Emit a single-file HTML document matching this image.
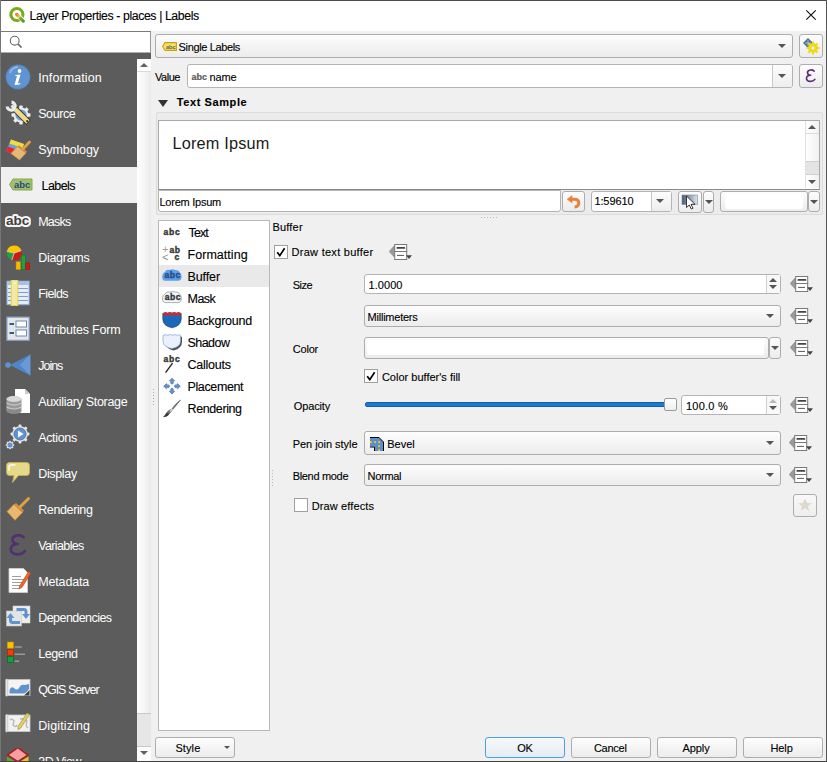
<!DOCTYPE html>
<html><head><meta charset="utf-8">
<style>
*{box-sizing:border-box;margin:0;padding:0}
html,body{width:827px;height:762px;overflow:hidden;background:#f0f0f0;font-family:"Liberation Sans",sans-serif;color:#000}
.a{position:absolute}
.t{position:absolute;white-space:pre;line-height:1;-webkit-text-stroke:0.12px currentColor}
.btn{position:absolute;border:1px solid #adadad;border-radius:3px;background:linear-gradient(#fdfdfd,#ececec)}
.field{position:absolute;border:1px solid #b4b4b4;border-radius:3px;background:#fff}
.tri{position:absolute;width:0;height:0;border-left:4px solid transparent;border-right:4px solid transparent;border-top:4px solid #555}
.triu{position:absolute;width:0;height:0;border-left:4px solid transparent;border-right:4px solid transparent;border-bottom:4px solid #555}
.f11{font-size:11px;letter-spacing:-0.1px;color:#000}
.f12{font-size:12px;color:#000}
.cb{position:absolute;width:14px;height:14px;border:1px solid #a0a0a0;background:#fff}
</style></head><body>
<div class="a" style="left:0;top:0;width:827px;height:31px;background:#fff"></div>
<div class="a" style="left:0;top:0;width:827px;height:1px;background:#4a4a4a"></div>
<svg class="a" style="left:8px;top:6px" width="18" height="18" viewBox="0 0 18 18"><defs><linearGradient id="qg" gradientUnits="userSpaceOnUse" x1="8.3" y1="8.3" x2="15.5" y2="15.5"><stop offset="0" stop-color="#f07818"/><stop offset="0.22" stop-color="#f0a040"/><stop offset="0.38" stop-color="#d8e070"/><stop offset="0.55" stop-color="#78a838"/><stop offset="1" stop-color="#5a9a28"/></linearGradient></defs>
<circle cx="8.9" cy="8.5" r="6.05" fill="none" stroke="#7aaa1e" stroke-width="3.1"/>
<path d="M11 10.6 L17 16.6" stroke="#fff" stroke-width="4.6"/>
<path d="M8.6 8.4 L15.3 15.1" stroke="url(#qg)" stroke-width="3.2" stroke-linecap="round"/></svg>
<div class="t" style="left:29.50px;top:10px;font-family:'Liberation Sans';font-size:12.3px;font-weight:400;letter-spacing:-0.403px;color:#000;">Layer Properties - places | Labels</div>
<svg class="a" style="left:804px;top:8px" width="14" height="14" viewBox="0 0 14 14"><path d="M2.3 2.3L11.7 11.7M11.7 2.3L2.3 11.7" stroke="#111" stroke-width="1.15"/></svg>
<div class="a" style="left:0;top:31px;width:151px;height:22px;background:#fff;border-top:1px solid #7a7a7a;border-right:1px solid #9a9a9a;border-bottom:1px solid #adadad"></div>
<svg class="a" style="left:9px;top:35px" width="14" height="14" viewBox="0 0 14 14"><circle cx="5.7" cy="5.7" r="4.4" fill="none" stroke="#6a6a6a" stroke-width="1.1"/><path d="M8.9 8.9L12.6 12.6" stroke="#6a6a6a" stroke-width="1.5"/></svg>
<div class="a" style="left:0;top:53px;width:151px;height:6px;background:#5c5c5c"></div>
<div class="a" style="left:0;top:53px;width:137px;height:709px;background:#5c5c5c"></div>
<svg class="a" style="left:5px;top:64px" width="26" height="26" viewBox="0 0 26 26"><circle cx="13" cy="13" r="12.4" fill="#4f86c6"/><circle cx="13" cy="13" r="11.5" fill="#5f93d2"/><path d="M5 9 A9 9 0 0 1 13 3" stroke="#9cc0ea" stroke-width="1.3" fill="none"/><circle cx="14.5" cy="7" r="1.9" fill="#fff"/><path d="M10.5 11 L15.5 10.5 L13 19 Q13.5 19.8 15.5 19 L15 20.5 L9.5 21 L12 12 L10.3 12 Z" fill="#fff"/></svg>
<div class="t" style="left:38.2px;top:71.5px;font-size:12.5px;letter-spacing:0.1px;color:#fff;-webkit-text-stroke:0">Information</div>
<svg class="a" style="left:5px;top:100px" width="26" height="26" viewBox="0 0 26 26"><g fill="#ececec"><circle cx="16" cy="15" r="7.6"/><rect x="14.3" y="5.5" width="3.4" height="19" rx="0.8" transform="rotate(0 16 15)"/><rect x="14.3" y="5.5" width="3.4" height="19" rx="0.8" transform="rotate(45 16 15)"/><rect x="14.3" y="5.5" width="3.4" height="19" rx="0.8" transform="rotate(90 16 15)"/><rect x="14.3" y="5.5" width="3.4" height="19" rx="0.8" transform="rotate(135 16 15)"/></g><circle cx="16" cy="15" r="5.6" fill="#6f9fd8"/><path d="M9.5 8.5 L23.5 22.5" stroke="#2a2a2a" stroke-width="6.4"/><path d="M10.3 9.3 L23 22" stroke="#f2da80" stroke-width="4.6"/><circle cx="22.2" cy="21.2" r="1.1" fill="#333"/><path d="M10 9 L6.5 5.5" stroke="#e8e8e8" stroke-width="3"/><path d="M6.5 2.2 A4 4 0 1 1 2.2 6.5" stroke="#ececec" stroke-width="3.2" fill="none"/></svg>
<div class="t" style="left:38.2px;top:107.5px;font-size:12.5px;letter-spacing:-0.4px;color:#fff;-webkit-text-stroke:0">Source</div>
<svg class="a" style="left:5px;top:136px" width="26" height="26" viewBox="0 0 26 26"><path d="M6 3.5 L19 8 L14.5 21 L1 15.5 Z" fill="#6d9fd8"/><path d="M6 3.5 L19 8 L17.5 12 L4.5 7.5Z" fill="#f0dc40"/><path d="M1 15.5 L3.2 10.5 L16 15.5 L14.5 21Z" fill="#e82828"/><path d="M12.5 10.5 L21 17 L14.5 24 L6 17.5 Z" fill="#e6b878" stroke="#c89040" stroke-width="0.7"/><path d="M12.5 10.5 L21 17 L22 15.5 L14 9.2Z" fill="#d09040"/><path d="M18 13 L24.5 6" stroke="#e0a040" stroke-width="2.8" stroke-linecap="round"/></svg>
<div class="t" style="left:38.2px;top:143.5px;font-size:12.5px;letter-spacing:-0.125px;color:#fff;-webkit-text-stroke:0">Symbology</div>
<div class="a" style="left:1px;top:167px;width:136px;height:36px;background:#f0f0f0"></div>
<svg class="a" style="left:8px;top:178px" width="26" height="14" viewBox="0 0 26 14"><path d="M1.5 6.5 L5 1 L24 1 L24 12 L5 12 Z" fill="#9ec070" stroke="#8aa84a" stroke-width="1"/><text x="6" y="10" font-family="Liberation Sans" font-weight="bold" font-size="9.5" fill="#2a4a78">abc</text></svg>
<div class="t" style="left:41.6px;top:179.5px;font-size:12.5px;letter-spacing:-0.6px;color:#000">Labels</div>
<svg class="a" style="left:5px;top:208px" width="26" height="26" viewBox="0 0 26 26"><text x="1" y="17" font-family="Liberation Sans" font-weight="bold" font-size="13.5" fill="#404040" stroke="#f4f4f4" stroke-width="4.2" paint-order="stroke" stroke-linejoin="round">abc</text></svg>
<div class="t" style="left:38.2px;top:215.5px;font-size:12.5px;letter-spacing:-0.75px;color:#fff;-webkit-text-stroke:0">Masks</div>
<svg class="a" style="left:5px;top:244px" width="26" height="26" viewBox="0 0 26 26"><circle cx="9.2" cy="9" r="7.5" fill="#d01818"/><path d="M9.2 9 L1.9 7.3 A7.5 7.5 0 0 1 16.3 6.6Z" fill="#f5c800"/><path d="M9.2 9 L1.9 7.3 A7.5 7.5 0 0 0 6.8 16.1Z" fill="#20a040"/><path d="M9.2 9 L1.9 7.3 M9.2 9 L16.3 6.6 M9.2 9 L6.8 16.1" stroke="#eee" stroke-width="0.7"/><rect x="11" y="17.7" width="4.5" height="8" fill="#f5b800" stroke="#c08000" stroke-width="0.5"/><rect x="16.3" y="11" width="4.2" height="14.7" fill="#20a040" stroke="#107020" stroke-width="0.5"/><rect x="20.8" y="19" width="3.8" height="6.7" fill="#d01818" stroke="#901010" stroke-width="0.5"/></svg>
<div class="t" style="left:38.2px;top:251.5px;font-size:12.5px;letter-spacing:-0.286px;color:#fff;-webkit-text-stroke:0">Diagrams</div>
<svg class="a" style="left:5px;top:280px" width="26" height="26" viewBox="0 0 26 26"><rect x="1.9" y="1.1" width="22.3" height="23.7" fill="#e4ecf6" stroke="#7f9fc8" stroke-width="1"/><rect x="2.4" y="1.6" width="21.3" height="3.4" fill="#a8c0e0"/><path d="M3 8.5h20M3 12.5h20M3 16.5h20M3 20.5h20" stroke="#7f9fc8" stroke-width="1"/><rect x="6.3" y="0" width="6.5" height="25.8" fill="#f2e8a8" stroke="#e8d840" stroke-width="1"/><rect x="9" y="2.5" width="1.3" height="1.3" fill="#fff"/></svg>
<div class="t" style="left:38.2px;top:287.5px;font-size:12.5px;letter-spacing:-0.6px;color:#fff;-webkit-text-stroke:0">Fields</div>
<svg class="a" style="left:5px;top:316px" width="26" height="26" viewBox="0 0 26 26"><rect x="1.9" y="1.1" width="22.3" height="23.2" fill="#e6e6e6" stroke="#7f9fc8" stroke-width="1.2"/><rect x="11" y="5" width="10.5" height="6" fill="#fff" stroke="#6a8ab8" stroke-width="1"/><rect x="11" y="14" width="10.5" height="6" fill="#fff" stroke="#6a8ab8" stroke-width="1"/><rect x="4.5" y="7" width="4.5" height="2" fill="#3a5a80"/><rect x="4.5" y="16" width="4.5" height="2" fill="#3a5a80"/></svg>
<div class="t" style="left:38.2px;top:323.5px;font-size:12.5px;letter-spacing:-0.214px;color:#fff;-webkit-text-stroke:0">Attributes Form</div>
<svg class="a" style="left:5px;top:352px" width="26" height="26" viewBox="0 0 26 26"><path d="M5 13 L25.3 2.6 L25.3 23.4Z" fill="#4f86c8"/><path d="M25.3 2.6 L25.3 23.4 L15 13Z" fill="#6a9ad6"/><circle cx="3" cy="13" r="2.8" fill="#5f93cf"/></svg>
<div class="t" style="left:38.2px;top:359.5px;font-size:12.5px;letter-spacing:-1.0px;color:#fff;-webkit-text-stroke:0">Joins</div>
<svg class="a" style="left:5px;top:388px" width="26" height="26" viewBox="0 0 26 26"><path d="M10 1 L20 1 L25 6 L25 25 L10 25 Z" fill="#fff"/><path d="M20 1 L20 6 L25 6Z" fill="#ccc"/><ellipse cx="9" cy="11" rx="7.5" ry="3" fill="#bbb"/><rect x="1.5" y="11" width="15" height="12" fill="#9a9a9a"/><ellipse cx="9" cy="23" rx="7.5" ry="3" fill="#8a8a8a"/><path d="M1.5 15 Q9 19 16.5 15 M1.5 19 Q9 23 16.5 19" stroke="#d0d0d0" fill="none" stroke-width="1"/><ellipse cx="9" cy="11" rx="7.5" ry="3" fill="#d8d8d8"/></svg>
<div class="t" style="left:38.2px;top:395.5px;font-size:12.5px;letter-spacing:-0.312px;color:#fff;-webkit-text-stroke:0">Auxiliary Storage</div>
<svg class="a" style="left:5px;top:424px" width="26" height="26" viewBox="0 0 26 26"><g fill="#e6e6e6"><rect x="13.6" y="0.6" width="2.8" height="18.8" rx="0.7" transform="rotate(0 15 10)"/><rect x="13.6" y="0.6" width="2.8" height="18.8" rx="0.7" transform="rotate(45 15 10)"/><rect x="13.6" y="0.6" width="2.8" height="18.8" rx="0.7" transform="rotate(90 15 10)"/><rect x="13.6" y="0.6" width="2.8" height="18.8" rx="0.7" transform="rotate(135 15 10)"/><circle cx="15" cy="10" r="7.8"/></g><circle cx="15" cy="10" r="6" fill="#5f93d2" stroke="#3d6aa0" stroke-width="0.8"/><path d="M13 6.5 L18.5 10 L13 13.5Z" fill="#fff"/><g fill="#e0e0e0"><rect x="4.2" y="16.8" width="1.6" height="8.4" transform="rotate(0 5 21)"/><rect x="4.2" y="16.8" width="1.6" height="8.4" transform="rotate(45 5 21)"/><rect x="4.2" y="16.8" width="1.6" height="8.4" transform="rotate(90 5 21)"/><rect x="4.2" y="16.8" width="1.6" height="8.4" transform="rotate(135 5 21)"/><circle cx="5" cy="21" r="3.4"/></g><circle cx="5" cy="21" r="2.5" fill="#5f93d2"/></svg>
<div class="t" style="left:38.2px;top:431.5px;font-size:12.5px;letter-spacing:-0.333px;color:#fff;-webkit-text-stroke:0">Actions</div>
<svg class="a" style="left:5px;top:460px" width="26" height="26" viewBox="0 0 26 26"><path d="M4.5 2.5 L21.5 2.5 Q24.5 2.5 24.5 5.5 L24.5 12.5 Q24.5 15.5 21.5 15.5 L13.5 15.5 L7.5 22.5 L9 15.5 L4.5 15.5 Q1.5 15.5 1.5 12.5 L1.5 5.5 Q1.5 2.5 4.5 2.5Z" fill="#e6d98a" stroke="#c4b050" stroke-width="0.9"/><path d="M4 10 L4 7 Q4 4.8 6.5 4.8 L10 4.8" stroke="#fff" stroke-width="1.3" fill="none" stroke-linecap="round"/></svg>
<div class="t" style="left:38.2px;top:467.5px;font-size:12.5px;letter-spacing:-0.333px;color:#fff;-webkit-text-stroke:0">Display</div>
<svg class="a" style="left:5px;top:496px" width="26" height="26" viewBox="0 0 26 26"><path d="M2 15.6 L9 8.3 L17.5 16.5 L10 24.3Z" fill="#e8b870" stroke="#c88a30" stroke-width="0.8"/><path d="M9 8.3 L17.5 16.5 L19 14.5 L11 7Z" fill="#d09040"/><path d="M15 11 L23.5 2.5" stroke="#e0a040" stroke-width="3" stroke-linecap="round"/></svg>
<div class="t" style="left:38.2px;top:503.5px;font-size:12.5px;letter-spacing:-0.375px;color:#fff;-webkit-text-stroke:0">Rendering</div>
<svg class="a" style="left:5px;top:532px" width="26" height="26" viewBox="0 0 26 26"><path d="M18.5 5.2 Q16 2.8 12.5 3.3 Q7 4 7.5 8 Q8 11.5 12.5 12 Q6 12.5 5.8 17 Q6 22.3 12.5 22.3 Q17.5 22.3 19.8 19" stroke="#55306f" stroke-width="2.7" fill="none" stroke-linecap="round"/><path d="M11 12 L14 12" stroke="#55306f" stroke-width="1.8"/></svg>
<div class="t" style="left:38.2px;top:539.5px;font-size:12.5px;letter-spacing:-0.625px;color:#fff;-webkit-text-stroke:0">Variables</div>
<svg class="a" style="left:5px;top:568px" width="26" height="26" viewBox="0 0 26 26"><path d="M4 0.5 L18.5 0.5 L22.5 4.5 L22.5 24.5 L4 24.5Z" fill="#fff" stroke="#d0d0d0" stroke-width="0.8"/><path d="M7 8.5h9M7 11.5h12M7 14.5h12M7 17.5h11M7 20.5h8" stroke="#a0a0a0" stroke-width="1"/><path d="M14.5 18 L23.5 3.5 L26 5 L17 19.5 L14 20.8Z" fill="#e86a28" stroke="#a04010" stroke-width="0.5"/></svg>
<div class="t" style="left:38.2px;top:575.5px;font-size:12.5px;letter-spacing:-0.143px;color:#fff;-webkit-text-stroke:0">Metadata</div>
<svg class="a" style="left:5px;top:604px" width="26" height="26" viewBox="0 0 26 26"><rect x="8" y="2" width="17" height="17" fill="#eeeeee" stroke="#d0d0d0" stroke-width="0.6"/><rect x="1.5" y="7" width="15" height="15" fill="#e4e4e4" stroke="#c8c8c8" stroke-width="0.6"/><path d="M11.5 5.5 L19 5.5 Q21 5.5 21 8 L21 11" stroke="#5f93cf" stroke-width="3" fill="none"/><path d="M17 10 L21 15 L25 10Z" fill="#5f93cf"/><path d="M15 18.5 L7.5 18.5 Q5.5 18.5 5.5 16 L5.5 13" stroke="#5f93cf" stroke-width="3" fill="none"/><path d="M1.5 14 L5.5 9 L9.5 14Z" fill="#5f93cf"/></svg>
<div class="t" style="left:38.2px;top:611.5px;font-size:12.5px;letter-spacing:-0.545px;color:#fff;-webkit-text-stroke:0">Dependencies</div>
<svg class="a" style="left:5px;top:640px" width="26" height="26" viewBox="0 0 26 26"><rect x="2.3" y="2" width="6.2" height="6.2" fill="#f5c400" stroke="#d09000" stroke-width="0.6"/><rect x="2.3" y="9.6" width="6.2" height="6" fill="#e84010" stroke="#b02000" stroke-width="0.6"/><rect x="2.3" y="16.6" width="6.2" height="6" fill="#10a040" stroke="#106020" stroke-width="0.6"/><path d="M9.7 7h7M9.7 14.2h10.3M9.7 21.2h4.5" stroke="#9a9a9a" stroke-width="1.6"/></svg>
<div class="t" style="left:38.2px;top:647.5px;font-size:12.5px;letter-spacing:-0.4px;color:#fff;-webkit-text-stroke:0">Legend</div>
<svg class="a" style="left:5px;top:676px" width="26" height="26" viewBox="0 0 26 26"><rect x="2" y="3.6" width="23" height="16" fill="#f4f4f4" stroke="#c8c8c8" stroke-width="0.8"/><rect x="0.6" y="3" width="2.2" height="17.2" rx="1" fill="#e8e8e8" stroke="#bbb" stroke-width="0.6"/><path d="M4.5 17.5 L4.5 14 Q6 10 9 12 Q12 15 14 12 Q16 7.5 20 9 L24 8 L24 13 Q21 17 19 17.5Z" fill="#5f93cf"/><path d="M19 19.5 L24.5 14 L24.5 19.5Z" fill="#444"/></svg>
<div class="t" style="left:38.2px;top:683.5px;font-size:12.5px;letter-spacing:-1.0px;color:#fff;-webkit-text-stroke:0">QGIS Server</div>
<svg class="a" style="left:5px;top:712px" width="26" height="26" viewBox="0 0 26 26"><rect x="2" y="3" width="23" height="16.5" fill="#f2f2f2" stroke="#c8c8c8" stroke-width="0.8"/><rect x="0.6" y="2.5" width="2.2" height="17.5" rx="1" fill="#e8e8e8" stroke="#bbb" stroke-width="0.6"/><path d="M5 8 Q7 6 9 9 L8 13 Q11 16 12 13 M15 7 Q18 6 22 9 Q20 14 23 16" stroke="#b8b8b8" stroke-width="1.4" fill="none"/><path d="M13 14.5 L22 1 L24.5 2.6 L15.5 16.3 L13 17.5Z" fill="#e8d060" stroke="#908030" stroke-width="0.6"/></svg>
<div class="t" style="left:38.2px;top:719.5px;font-size:12.5px;letter-spacing:0.111px;color:#fff;-webkit-text-stroke:0">Digitizing</div>
<svg class="a" style="left:5px;top:748px" width="26" height="26" viewBox="0 0 26 26"><path d="M12.8 -0.3 L22.7 7 L12.8 13.5 L2.8 7Z" fill="#f4a0a0" stroke="#b01818" stroke-width="1.3"/><path d="M2 8.5 L12.8 15 L12.8 20 L2 13Z" fill="#60a830"/><path d="M23.5 8.5 L12.8 15 L12.8 20 L23.5 13Z" fill="#e8c820"/><path d="M12.8 -0.3 L22.7 7 L12.8 13.5 L2.8 7Z" fill="#f4a0a0" stroke="#b01818" stroke-width="1.3"/></svg>
<div class="t" style="left:38.2px;top:755.5px;font-size:12.5px;letter-spacing:-0.5px;color:#fff;-webkit-text-stroke:0">3D View</div>
<div class="a" style="left:137px;top:59px;width:14px;height:702px;background:linear-gradient(90deg,#fff,#f2f2f2 70%,#e8e8e8)"></div>
<div class="a" style="left:137px;top:59px;width:14px;height:13px;background:#fcfcfc;border-bottom:1px solid #d8d8d8"></div>
<div class="triu" style="left:140px;top:63px;border-bottom-color:#606060"></div>
<div class="a" style="left:137px;top:713px;width:14px;height:34px;background:#e6e6e6;border-top:1px solid #c8c8c8;border-bottom:1px solid #c8c8c8"></div>
<div class="a" style="left:137px;top:747px;width:14px;height:14px;background:#fcfcfc"></div>
<div class="tri" style="left:140px;top:751px;border-top-color:#606060"></div>
<div class="btn" style="left:155px;top:34px;width:638px;height:24px"></div>
<svg class="a" style="left:161.5px;top:42px" width="15" height="9" viewBox="0 0 15 9"><path d="M0.6 4.5 L3 0.6 L14.4 0.6 L14.4 8.4 L3 8.4Z" fill="#f4e070" stroke="#c8a400" stroke-width="1.1"/><text x="4" y="6.8" font-family="Liberation Sans" font-size="5.6" font-weight="bold" fill="#6a6040">abc</text></svg>
<div class="t" style="left:178.60px;top:42px;font-family:'Liberation Sans';font-size:11px;font-weight:400;letter-spacing:-0.367px;color:#000;">Single Labels</div>
<div class="tri" style="left:778px;top:44px"></div>
<div class="btn" style="left:799px;top:34px;width:24px;height:24px"></div>
<svg class="a" style="left:802px;top:37px" width="18" height="18" viewBox="0 0 18 18"><path d="M1 6 L6 1 L11 6 L6 11Z" fill="#4a7090"/><path d="M3 6h6M6 3v6" stroke="#c0d0e0" stroke-width="0.8"/><g fill="#f0d820"><circle cx="11" cy="11" r="5"/><rect x="10" y="4.5" width="2" height="13"/><rect x="4.5" y="10" width="13" height="2"/><rect x="10" y="4.5" width="2" height="13" transform="rotate(45 11 11)"/><rect x="10" y="4.5" width="2" height="13" transform="rotate(-45 11 11)"/></g><circle cx="11" cy="11" r="1.5" fill="#fff"/></svg>
<div class="t" style="left:155.10px;top:72px;font-family:'Liberation Sans';font-size:11px;font-weight:400;letter-spacing:-0.5px;color:#000;">Value</div>
<div class="field" style="left:187px;top:64px;width:606px;height:24px"></div>
<div class="a" style="left:772px;top:65px;width:20px;height:22px;border-left:1px solid #c8c8c8;background:linear-gradient(#fcfcfc,#eeeeee);border-radius:0 2px 2px 0"></div>
<div class="tri" style="left:778px;top:74px"></div>
<div class="t" style="left:191.50px;top:73px;font-family:'Liberation Sans';font-size:9px;font-weight:700;letter-spacing:0.0px;color:#5a5a5a;-webkit-text-stroke:0.2px currentColor">abc</div>
<div class="t" style="left:209.60px;top:72px;font-family:'Liberation Sans';font-size:11px;font-weight:400;letter-spacing:-0.2px;color:#000;">name</div>
<div class="btn" style="left:799px;top:64px;width:24px;height:24px"></div>
<svg class="a" style="left:803px;top:68px" width="15.6" height="15.6" viewBox="0 0 26 26"><path d="M18.5 5.2 Q16 2.8 12.5 3.3 Q7 4 7.5 8 Q8 11.5 12.5 12 Q6 12.5 5.8 17 Q6 22.3 12.5 22.3 Q17.5 22.3 19.8 19" stroke="#5a2e78" stroke-width="2.7" fill="none" stroke-linecap="round"/><path d="M11 12 L14 12" stroke="#5a2e78" stroke-width="2"/></svg>
<div class="a" style="left:157.5px;top:100px;width:0;height:0;border-left:5.5px solid transparent;border-right:5.5px solid transparent;border-top:7px solid #333"></div>
<div class="t" style="left:176.70px;top:97px;font-family:'Liberation Sans';font-size:11px;font-weight:700;letter-spacing:0.6px;color:#000;">Text Sample</div>
<div class="a" style="left:156px;top:112px;width:667px;height:103px;border:1px solid #dcdcdc;border-radius:2px;background:#ececec"></div>
<div class="a" style="left:158px;top:120px;width:662px;height:70px;background:#fff;border:1px solid #a8a8a8;border-bottom:1px solid #8a8a8a"></div>
<div class="t" style="left:172.40px;top:135px;font-family:'Liberation Sans';font-size:16.3px;font-weight:400;letter-spacing:0.2px;color:#1a1a1a;-webkit-text-stroke:0">Lorem Ipsum</div>
<div class="a" style="left:805px;top:121px;width:14px;height:67px;background:linear-gradient(90deg,#fff,#f0f0f0);border-left:1px solid #e0e0e0"></div>
<div class="triu" style="left:808px;top:125px;border-bottom-color:#555"></div>
<div class="a" style="left:805px;top:133px;width:14px;height:1px;background:#dcdcdc"></div>
<div class="a" style="left:806px;top:161px;width:13px;height:14px;background:#e4e4e4;border-top:1px solid #d0d0d0;border-bottom:1px solid #d0d0d0"></div>
<div class="tri" style="left:808px;top:180px;border-top-color:#555"></div>
<div class="field" style="left:158px;top:190px;width:403px;height:22px;border-radius:0 0 3px 3px"></div>
<div class="t" style="left:159.50px;top:197px;font-family:'Liberation Sans';font-size:11px;font-weight:400;letter-spacing:-0.25px;color:#000;">Lorem Ipsum</div>
<div class="btn" style="left:562px;top:191px;width:23px;height:21px"></div>
<svg class="a" style="left:566px;top:194px" width="15" height="15" viewBox="0 0 15 15"><path d="M4.5 5.2 L8.5 5.2 Q12.8 5.2 12.8 9 Q12.8 12.6 8.6 13" stroke="#e8823a" stroke-width="3" fill="none"/><path d="M0.8 5.2 L6.3 1 L6.3 9.4Z" fill="#e8823a"/></svg>
<div class="field" style="left:591px;top:191px;width:81px;height:21px;border-radius:3px"></div>
<div class="a" style="left:651px;top:192px;width:20px;height:19px;border-left:1px solid #c8c8c8;background:linear-gradient(#fcfcfc,#eeeeee)"></div>
<div class="tri" style="left:656px;top:199px"></div>
<div class="t" style="left:594.40px;top:196px;font-family:'Liberation Sans';font-size:11px;font-weight:400;letter-spacing:-0.1px;color:#000;">1:59610</div>
<div class="btn" style="left:678px;top:191px;width:24px;height:22px"></div>
<svg class="a" style="left:681px;top:194px" width="18" height="16" viewBox="0 0 18 16"><defs><linearGradient id="pg" x1="0" x2="1" y1="0" y2="0"><stop offset="0" stop-color="#4a5a72"/><stop offset="0.45" stop-color="#8a9ab0"/><stop offset="1" stop-color="#dde4ec"/></linearGradient></defs><rect x="1" y="1" width="15.5" height="9.5" fill="url(#pg)" stroke="#7a8698" stroke-width="0.6"/><path d="M5.5 2 L5.5 13.5 L8.3 11 L10.3 15 L12 14.2 L10 10.3 L14 10.3Z" fill="#fff" stroke="#222" stroke-width="0.9"/></svg>
<div class="btn" style="left:703px;top:191px;width:11px;height:22px"></div>
<div class="tri" style="left:704.5px;top:200px"></div>
<div class="btn" style="left:720px;top:191px;width:88px;height:21px"></div>
<div class="a" style="left:725px;top:194px;width:78px;height:15px;background:#fff;border-radius:2px"></div>
<div class="btn" style="left:808px;top:191px;width:12px;height:21px"></div>
<div class="tri" style="left:810px;top:200px"></div>
<div class="a" style="left:153px;top:389px;width:1px;height:17px;background:repeating-linear-gradient(#a8a8a8 0 1px,transparent 1px 3px)"></div>
<div class="a" style="left:481px;top:217px;width:16px;height:1px;background:repeating-linear-gradient(90deg,#b8b8b8 0 1px,transparent 1px 3px)"></div>
<div class="a" style="left:158px;top:220px;width:112px;height:511px;background:#fff;border:1px solid #b8b8b8"></div>
<svg class="a" style="left:162px;top:223px" width="20" height="20" viewBox="0 0 20 20"><text x="1.6" y="12" font-family="Liberation Sans" font-weight="bold" stroke="currentColor" stroke-width="0.35" font-size="8.6" letter-spacing="0.7" fill="#333" color="#333">abc</text></svg>
<div class="t" style="left:188.50px;top:227px;font-family:'Liberation Sans';font-size:12.5px;font-weight:400;letter-spacing:-0.867px;color:#000;">Text</div>
<svg class="a" style="left:162px;top:245px" width="20" height="20" viewBox="0 0 20 20"><text x="0.2" y="8.2" font-family="Liberation Sans" font-size="10.5" fill="#999">+</text><text x="7.6" y="7.6" font-family="Liberation Sans" font-weight="bold" stroke="currentColor" stroke-width="0.35" font-size="8.6" letter-spacing="0.3" fill="#333" color="#333">ab</text><text x="0.2" y="15.8" font-family="Liberation Sans" font-size="10.5" fill="#888">&lt;</text><text x="12.6" y="14.6" font-family="Liberation Sans" font-weight="bold" stroke="currentColor" stroke-width="0.35" font-size="8.6" fill="#333" color="#333">c</text></svg>
<div class="t" style="left:187.50px;top:249px;font-family:'Liberation Sans';font-size:12.5px;font-weight:400;letter-spacing:0.044px;color:#000;">Formatting</div>
<div class="a" style="left:159px;top:265px;width:110px;height:22px;background:#e9e9e9"></div>
<svg class="a" style="left:162px;top:267px" width="20" height="20" viewBox="0 0 20 20"><path d="M3 13.8 Q0.2 13.5 0.2 10 Q0.2 6 3 5 Q4 2 8 3 Q10 1.6 13 3 Q17 2.5 18 5.5 Q19.8 7 19.6 10 Q19.4 13.8 16 13.8Z" fill="#5aa0f0"/><text x="2.6" y="11.2" font-family="Liberation Sans" font-weight="bold" stroke="currentColor" stroke-width="0.35" font-size="8.6" letter-spacing="0.5" fill="#2a4a7a" color="#2a4a7a">abc</text></svg>
<div class="t" style="left:187.50px;top:271px;font-family:'Liberation Sans';font-size:12.5px;font-weight:400;letter-spacing:-0.1px;color:#000;">Buffer</div>
<svg class="a" style="left:162px;top:289px" width="20" height="20" viewBox="0 0 20 20"><path d="M3 13.6 Q0.4 13.3 0.4 10 Q0.4 6 3 5 Q4 2.3 8 3 Q10 1.8 13 3 Q17 2.5 18 5.5 Q19.6 7 19.4 10 Q19.2 13.6 16 13.6Z" fill="#f2f5fb" stroke="#a8a8a8" stroke-width="0.9"/><text x="2.8" y="11.2" font-family="Liberation Sans" font-weight="bold" stroke="currentColor" stroke-width="0.35" font-size="8.6" letter-spacing="0.5" fill="#333" color="#333">abc</text></svg>
<div class="t" style="left:187.50px;top:293px;font-family:'Liberation Sans';font-size:12.5px;font-weight:400;letter-spacing:-0.5px;color:#000;">Mask</div>
<svg class="a" style="left:162px;top:311px" width="20" height="20" viewBox="0 0 20 20"><path d="M0.8 2.5 Q3 1 5.5 2 Q8 0.8 10 2 Q12.5 0.8 14.5 2 Q17 1 19.2 2.5 L19.2 8 Q19.2 15 10 16.8 Q0.8 15 0.8 8Z" fill="#1a68b8" stroke="#103060" stroke-width="0.6"/><path d="M0.8 2.5 Q3 1 5.5 2 Q8 0.8 10 2 Q12.5 0.8 14.5 2 Q17 1 19.2 2.5 L19.2 4.3 L0.8 4.3Z" fill="#e82020"/></svg>
<div class="t" style="left:187.50px;top:315px;font-family:'Liberation Sans';font-size:12.5px;font-weight:400;letter-spacing:-0.222px;color:#000;">Background</div>
<svg class="a" style="left:162px;top:333px" width="20" height="20" viewBox="0 0 20 20"><path d="M2.5 3.5 Q5 2.3 7.5 3.3 Q10 2.2 12 3.3 Q14.5 2.3 17 3.3 Q19.5 3 20 4.5 L20 9 Q20 15.5 11.5 17.5 Q3 15.5 3 9Z" fill="#505050"/><path d="M1 2.4 Q3.5 1.2 6 2.2 Q8.5 1 10.5 2.2 Q13 1.2 15.5 2.2 Q18 1.5 18.5 2.4 L18.5 8 Q18.5 14 9.8 15.6 Q1 14 1 8Z" fill="#eaf0fc" stroke="#7aa0e0" stroke-width="0.7"/></svg>
<div class="t" style="left:187.50px;top:337px;font-family:'Liberation Sans';font-size:12.5px;font-weight:400;letter-spacing:-0.54px;color:#000;">Shadow</div>
<svg class="a" style="left:162px;top:355px" width="20" height="20" viewBox="0 0 20 20"><text x="1.6" y="6.8" font-family="Liberation Sans" font-weight="bold" stroke="currentColor" stroke-width="0.35" font-size="8.6" letter-spacing="0.7" fill="#333" color="#333">abc</text><path d="M10.5 8.2 L3.6 17.6" stroke="#222" stroke-width="1.4"/></svg>
<div class="t" style="left:187.50px;top:359px;font-family:'Liberation Sans';font-size:12.5px;font-weight:400;letter-spacing:-0.243px;color:#000;">Callouts</div>
<svg class="a" style="left:162px;top:377px" width="20" height="20" viewBox="0 0 20 20"><g fill="#6a90b8" stroke="#fff" stroke-width="0.9"><path d="M10 0.3 L14.3 4.6 L12.2 4.6 L12.2 6.5 L10 8.2 L7.8 6.5 L7.8 4.6 L5.7 4.6Z"/><path d="M10 18 L14.3 13.7 L12.2 13.7 L12.2 11.8 L10 10.1 L7.8 11.8 L7.8 13.7 L5.7 13.7Z"/><path d="M0.8 9.2 L5.1 4.9 L5.1 7 L7 7 L8.7 9.2 L7 11.4 L5.1 11.4 L5.1 13.5Z"/><path d="M19.2 9.2 L14.9 4.9 L14.9 7 L13 7 L11.3 9.2 L13 11.4 L14.9 11.4 L14.9 13.5Z"/></g></svg>
<div class="t" style="left:187.50px;top:381px;font-family:'Liberation Sans';font-size:12.5px;font-weight:400;letter-spacing:-0.375px;color:#000;">Placement</div>
<svg class="a" style="left:162px;top:399px" width="20" height="20" viewBox="0 0 20 20"><path d="M1.5 17.8 Q5.5 18 7.5 14.5 L18.5 1 Q13 5 9.5 10.5 Q6 11 4.5 14 Q3.5 16.5 1.5 17.8Z" fill="#7a7a7a" stroke="#4a4a4a" stroke-width="0.6"/><path d="M1.5 17.8 Q5.5 18 7.3 14.8 L4.6 13.8 Q3.5 16.5 1.5 17.8Z" fill="#3a3a3a"/><path d="M8.2 12.5 L10.5 10" stroke="#d8d8d8" stroke-width="1.4"/></svg>
<div class="t" style="left:187.50px;top:403px;font-family:'Liberation Sans';font-size:12.5px;font-weight:400;letter-spacing:-0.388px;color:#000;">Rendering</div>
<div class="t" style="left:272.40px;top:222px;font-family:'Liberation Sans';font-size:11px;font-weight:400;letter-spacing:0.2px;color:#000;">Buffer</div>
<div class="cb" style="left:274px;top:245px;width:14px;height:14px"></div>
<svg class="a" style="left:276px;top:247px" width="10" height="10" viewBox="0 0 10 10"><path d="M1.2 5.2 L3.8 8.6 L8.6 1.2" stroke="#000" stroke-width="1.7" fill="none"/></svg>
<div class="t" style="left:291.60px;top:247px;font-family:'Liberation Sans';font-size:11px;font-weight:400;letter-spacing:0.267px;color:#000;">Draw text buffer</div>
<svg class="a" style="left:389px;top:244px" width="24" height="17" viewBox="0 0 24 17"><path d="M0.2 7.6 L5.5 1.4 L5.5 13.2Z" fill="#9a9a9a" stroke="#777" stroke-width="0.5"/><rect x="5.7" y="0.5" width="12" height="15" fill="#fff" stroke="#7a7a72" stroke-width="1"/><path d="M5.2 7.5h13" stroke="#7a7a72" stroke-width="1"/><path d="M8.3 3.9h7.2" stroke="#444" stroke-width="1.7" stroke-linecap="round"/><path d="M8 11.4h7" stroke="#555" stroke-width="1"/><path d="M17 11.2 L23 11.2 L20 15Z" fill="#444"/></svg>
<div class="t" style="left:292.80px;top:280px;font-family:'Liberation Sans';font-size:11px;font-weight:400;letter-spacing:-0.567px;color:#000;">Size</div>
<div class="field" style="left:364px;top:274px;width:417px;height:20px"></div>
<div class="a" style="left:766px;top:275px;width:14px;height:18px;border-left:1px solid #d0d0d0;background:#f8f8f8"></div>
<div class="triu" style="left:769px;top:278px"></div>
<div class="tri" style="left:769px;top:285px"></div>
<div class="t" style="left:368.60px;top:280px;font-family:'Liberation Sans';font-size:11px;font-weight:400;letter-spacing:0.04px;color:#000;">1.0000</div>
<svg class="a" style="left:790px;top:276px" width="24" height="17" viewBox="0 0 24 17"><path d="M0.2 7.6 L5.5 1.4 L5.5 13.2Z" fill="#9a9a9a" stroke="#777" stroke-width="0.5"/><rect x="5.7" y="0.5" width="12" height="15" fill="#fff" stroke="#7a7a72" stroke-width="1"/><path d="M5.2 7.5h13" stroke="#7a7a72" stroke-width="1"/><path d="M8.3 3.9h7.2" stroke="#444" stroke-width="1.7" stroke-linecap="round"/><path d="M8 11.4h7" stroke="#555" stroke-width="1"/><path d="M17 11.2 L23 11.2 L20 15Z" fill="#444"/></svg>
<div class="btn" style="left:364px;top:305px;width:417px;height:22px"></div>
<div class="t" style="left:367.60px;top:312px;font-family:'Liberation Sans';font-size:11px;font-weight:400;letter-spacing:-0.24px;color:#000;">Millimeters</div>
<div class="tri" style="left:766px;top:314px"></div>
<svg class="a" style="left:790px;top:308px" width="24" height="17" viewBox="0 0 24 17"><path d="M0.2 7.6 L5.5 1.4 L5.5 13.2Z" fill="#9a9a9a" stroke="#777" stroke-width="0.5"/><rect x="5.7" y="0.5" width="12" height="15" fill="#fff" stroke="#7a7a72" stroke-width="1"/><path d="M5.2 7.5h13" stroke="#7a7a72" stroke-width="1"/><path d="M8.3 3.9h7.2" stroke="#444" stroke-width="1.7" stroke-linecap="round"/><path d="M8 11.4h7" stroke="#555" stroke-width="1"/><path d="M17 11.2 L23 11.2 L20 15Z" fill="#444"/></svg>
<div class="t" style="left:292.80px;top:344px;font-family:'Liberation Sans';font-size:11px;font-weight:400;letter-spacing:-0.225px;color:#000;">Color</div>
<div class="btn" style="left:364px;top:337px;width:405px;height:22px"></div>
<div class="a" style="left:367px;top:340px;width:397px;height:15px;background:#fff;border-radius:2px"></div>
<div class="btn" style="left:769px;top:337px;width:12px;height:22px"></div>
<div class="tri" style="left:771px;top:346px"></div>
<svg class="a" style="left:790px;top:340px" width="24" height="17" viewBox="0 0 24 17"><path d="M0.2 7.6 L5.5 1.4 L5.5 13.2Z" fill="#9a9a9a" stroke="#777" stroke-width="0.5"/><rect x="5.7" y="0.5" width="12" height="15" fill="#fff" stroke="#7a7a72" stroke-width="1"/><path d="M5.2 7.5h13" stroke="#7a7a72" stroke-width="1"/><path d="M8.3 3.9h7.2" stroke="#444" stroke-width="1.7" stroke-linecap="round"/><path d="M8 11.4h7" stroke="#555" stroke-width="1"/><path d="M17 11.2 L23 11.2 L20 15Z" fill="#444"/></svg>
<div class="cb" style="left:364px;top:369px;width:14px;height:14px"></div>
<svg class="a" style="left:366px;top:371px" width="10" height="10" viewBox="0 0 10 10"><path d="M1.2 5.2 L3.8 8.6 L8.6 1.2" stroke="#000" stroke-width="1.7" fill="none"/></svg>
<div class="t" style="left:381.90px;top:372px;font-family:'Liberation Sans';font-size:11px;font-weight:400;letter-spacing:0.006px;color:#000;">Color buffer's fill</div>
<div class="t" style="left:293.80px;top:401px;font-family:'Liberation Sans';font-size:11px;font-weight:400;letter-spacing:-0.133px;color:#000;">Opacity</div>
<div class="a" style="left:365px;top:402px;width:306px;height:5px;background:#1e7ad0;border:1px solid #1060b0;border-radius:2px"></div>
<div class="a" style="left:664px;top:398px;width:13px;height:13px;background:linear-gradient(#fff,#eee);border:1px solid #9a9a9a;border-radius:2px"></div>
<div class="field" style="left:681px;top:395px;width:100px;height:20px"></div>
<div class="a" style="left:766px;top:396px;width:14px;height:18px;border-left:1px solid #d0d0d0;background:#f8f8f8"></div>
<div class="triu" style="left:769px;top:399px;border-bottom-color:#bbb"></div>
<div class="tri" style="left:769px;top:406px"></div>
<div class="t" style="left:685.90px;top:401px;font-family:'Liberation Sans';font-size:11px;font-weight:400;letter-spacing:0.267px;color:#000;">100.0 %</div>
<svg class="a" style="left:790px;top:397px" width="24" height="17" viewBox="0 0 24 17"><path d="M0.2 7.6 L5.5 1.4 L5.5 13.2Z" fill="#9a9a9a" stroke="#777" stroke-width="0.5"/><rect x="5.7" y="0.5" width="12" height="15" fill="#fff" stroke="#7a7a72" stroke-width="1"/><path d="M5.2 7.5h13" stroke="#7a7a72" stroke-width="1"/><path d="M8.3 3.9h7.2" stroke="#444" stroke-width="1.7" stroke-linecap="round"/><path d="M8 11.4h7" stroke="#555" stroke-width="1"/><path d="M17 11.2 L23 11.2 L20 15Z" fill="#444"/></svg>
<div class="t" style="left:292.70px;top:439px;font-family:'Liberation Sans';font-size:11px;font-weight:400;letter-spacing:-0.046px;color:#000;">Pen join style</div>
<div class="btn" style="left:364px;top:431px;width:417px;height:24px"></div>
<svg class="a" style="left:369px;top:437px" width="16" height="15" viewBox="0 0 16 15"><path d="M1 0.5 L10 0.5 L14.5 5 L14.5 14 L5.5 14 L5.5 9.5 L1 9.5Z" fill="#5f8ccc"/><path d="M1 0.5 L10 0.5 L14.5 5 L14.5 14 M1 10 L5.5 10 L5.5 14" stroke="#000" stroke-width="1" fill="none"/><g fill="#f4d400"><rect x="1" y="4.2" width="1.8" height="1.8"/><rect x="5.2" y="4.2" width="1.8" height="1.8"/><rect x="9.2" y="4.2" width="1.8" height="1.8"/><rect x="9.2" y="8.2" width="1.8" height="1.8"/><rect x="9.2" y="12.2" width="1.8" height="1.8"/></g></svg>
<div class="t" style="left:387.20px;top:439px;font-family:'Liberation Sans';font-size:11px;font-weight:400;letter-spacing:0.0px;color:#000;">Bevel</div>
<div class="tri" style="left:766px;top:441px"></div>
<svg class="a" style="left:789px;top:435px" width="24" height="17" viewBox="0 0 24 17"><path d="M0.2 7.6 L5.5 1.4 L5.5 13.2Z" fill="#9a9a9a" stroke="#777" stroke-width="0.5"/><rect x="5.7" y="0.5" width="12" height="15" fill="#fff" stroke="#7a7a72" stroke-width="1"/><path d="M5.2 7.5h13" stroke="#7a7a72" stroke-width="1"/><path d="M8.3 3.9h7.2" stroke="#444" stroke-width="1.7" stroke-linecap="round"/><path d="M8 11.4h7" stroke="#555" stroke-width="1"/><path d="M17 11.2 L23 11.2 L20 15Z" fill="#444"/></svg>
<div class="t" style="left:292.70px;top:471px;font-family:'Liberation Sans';font-size:11px;font-weight:400;letter-spacing:-0.322px;color:#000;">Blend mode</div>
<div class="btn" style="left:364px;top:464px;width:417px;height:22px"></div>
<div class="t" style="left:367.50px;top:471px;font-family:'Liberation Sans';font-size:11px;font-weight:400;letter-spacing:-0.28px;color:#000;">Normal</div>
<div class="tri" style="left:766px;top:473px"></div>
<svg class="a" style="left:789px;top:467px" width="24" height="17" viewBox="0 0 24 17"><path d="M0.2 7.6 L5.5 1.4 L5.5 13.2Z" fill="#9a9a9a" stroke="#777" stroke-width="0.5"/><rect x="5.7" y="0.5" width="12" height="15" fill="#fff" stroke="#7a7a72" stroke-width="1"/><path d="M5.2 7.5h13" stroke="#7a7a72" stroke-width="1"/><path d="M8.3 3.9h7.2" stroke="#444" stroke-width="1.7" stroke-linecap="round"/><path d="M8 11.4h7" stroke="#555" stroke-width="1"/><path d="M17 11.2 L23 11.2 L20 15Z" fill="#444"/></svg>
<div class="a" style="left:272px;top:470px;width:1px;height:16px;background:repeating-linear-gradient(#b8b8b8 0 1px,transparent 1px 3px)"></div>
<div class="cb" style="left:294px;top:498px;width:14px;height:14px"></div>
<div class="t" style="left:311.80px;top:501px;font-family:'Liberation Sans';font-size:11px;font-weight:400;letter-spacing:0.109px;color:#000;">Draw effects</div>
<div class="btn" style="left:793px;top:494px;width:24px;height:23px;background:linear-gradient(#f8f8f8,#eeeeee)"></div>
<svg class="a" style="left:797px;top:497px" width="16" height="16" viewBox="0 0 16 16"><path d="M8 1.5 L10 6 L14.8 6.3 L11 9.3 L12.3 14 L8 11.3 L3.7 14 L5 9.3 L1.2 6.3 L6 6Z" fill="#dcd8cc"/></svg>
<div class="btn" style="left:155px;top:737px;width:80px;height:21px"></div>
<div class="t" style="left:175.40px;top:743px;font-family:'Liberation Sans';font-size:11px;font-weight:400;letter-spacing:0.1px;color:#000;">Style</div>
<div class="tri" style="left:224px;top:745.5px;border-left-width:3px;border-right-width:3px;border-top-width:3px"></div>
<div class="btn" style="left:485px;top:737px;width:80px;height:21px;border-color:#4aa0f0;background:linear-gradient(#f6f9fc,#e6ecf2)"></div>
<div class="t" style="left:517.30px;top:743px;font-family:'Liberation Sans';font-size:11px;font-weight:400;letter-spacing:-0.4px;color:#000;">OK</div>
<div class="btn" style="left:571px;top:737px;width:80px;height:21px"></div>
<div class="t" style="left:593.90px;top:743px;font-family:'Liberation Sans';font-size:11px;font-weight:400;letter-spacing:-0.26px;color:#000;">Cancel</div>
<div class="btn" style="left:657px;top:737px;width:80px;height:21px"></div>
<div class="t" style="left:682.50px;top:743px;font-family:'Liberation Sans';font-size:11px;font-weight:400;letter-spacing:-0.075px;color:#000;">Apply</div>
<div class="btn" style="left:743px;top:737px;width:80px;height:21px"></div>
<div class="t" style="left:770.40px;top:743px;font-family:'Liberation Sans';font-size:11px;font-weight:400;letter-spacing:-0.067px;color:#000;">Help</div>
<div class="a" style="left:826px;top:0;width:1px;height:762px;background:#555"></div>
<div class="a" style="left:0;top:0;width:1px;height:762px;background:#767676"></div>
<div class="a" style="left:0;top:761px;width:827px;height:1px;background:#444"></div>
</body></html>
